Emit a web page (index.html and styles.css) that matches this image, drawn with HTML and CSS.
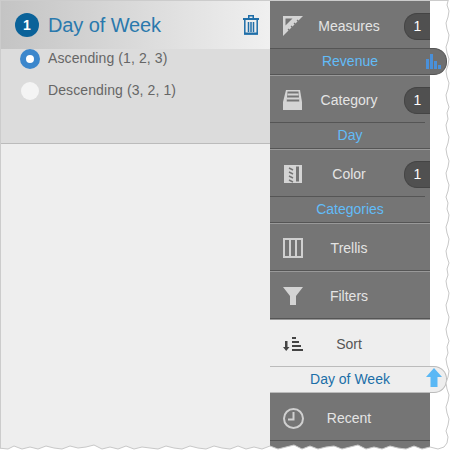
FILE: index.html
```html
<!DOCTYPE html>
<html>
<head>
  <meta charset="UTF-8">
  <title>Sort</title>
  <link rel="stylesheet" href="styles.css">
</head>
<body>
  <div class="app">
    <!-- sort options -->
    <div class="panel">
      <div class="sort-box">
        <div class="sort-head">
          <span class="num">1</span>
          <span class="sort-title">Day of Week</span>
          <svg class="trash" width="16" height="20" viewBox="0 0 16 20">
            <path fill="#1f6ea8" d="M0 3h16v2H0zM5 0h6v3H9.500V1.500h-3V3H5z"/>
            <path fill="none" stroke="#1f6ea8" stroke-width="1.500" d="M1.800 5v14h12.400V5M5.500 7v10M8 7v10M10.500 7v10"/>
            <path fill="#1f6ea8" d="M1 17.500h14V19.500H1z"/>
          </svg>
        </div>
        <div class="option first">
          <span class="radio on"></span>
          <span class="option-text">Ascending (1, 2, 3)</span>
        </div>
        <div class="option">
          <span class="radio"></span>
          <span class="option-text">Descending (3, 2, 1)</span>
        </div>
      </div>
    </div>

    <!-- shelf -->
    <div class="shelf">
      <div class="item tall">
        <svg class="icon" width="20" height="20" viewBox="0 0 20 20">
          <path fill="#d4d4d4" d="M0 0h20L0 20z"/>
          <path fill="#757575" d="M2.500 2.500h7l-7 7z"/>
          <path fill="none" stroke="#757575" stroke-width="1.200" d="M14 4l1.500 1.500M11 7l1.500 1.500M8 10l1.500 1.500M5 13l1.500 1.500"/>
        </svg>
        <span class="label">Measures</span>
        <span class="badge">1</span>
      </div>
      <div class="sub pill">
        <span>Revenue</span>
        <svg class="pill-icon" width="15" height="15" viewBox="0 0 15 15">
          <path fill="#4a90d9" d="M0 5h3v10H0zM4 0h3v15H4zM8 7h3v8H8zM12 11h3v4h-3z"/>
        </svg>
      </div>
      <div class="sep-light"></div>

      <div class="item short">
        <svg class="icon" width="20" height="20" viewBox="0 0 20 20">
          <path fill="#d4d4d4" d="M3 0h14l2 12v8H0v-8z"/>
          <path fill="#757575" d="M4.500 1.500h11l.8 10H3.700z"/>
          <path fill="#d4d4d4" d="M4.500 3.500h11v2h-11zM4 7.500h12v2H4z"/>
        </svg>
        <span class="label">Category</span>
        <span class="badge">1</span>
      </div>
      <div class="sub">Day</div>
      <div class="sep"></div>

      <div class="item short">
        <svg class="icon" width="18" height="18" viewBox="0 0 18 18">
          <path fill="#d4d4d4" d="M0 0h18v18H0z"/>
          <path fill="#757575" d="M12 1.500h3v15h-3z"/>
          <path fill="none" stroke="#757575" stroke-width="1.500" d="M5 3l4 2M5 7l4 2M5 11l4 2M5 15l4 2"/>
        </svg>
        <span class="label">Color</span>
        <span class="badge">1</span>
      </div>
      <div class="sub">Categories</div>
      <div class="sep"></div>

      <div class="item">
        <svg class="icon" width="20" height="20" viewBox="0 0 20 20">
          <path fill="none" stroke="#d0d0d0" stroke-width="2" d="M1 1h18v18H1zM7 1v18M13 1v18"/>
        </svg>
        <span class="label">Trellis</span>
      </div>
      <div class="sep"></div>

      <div class="item">
        <svg class="icon" width="20" height="18" viewBox="0 0 20 18">
          <path fill="#d4d4d4" d="M0 0h20l-7 9v9H7V9z"/>
        </svg>
        <span class="label">Filters</span>
      </div>
      <div class="sep"></div>

      <div class="item active">
        <svg class="icon" width="20" height="14" viewBox="0 0 20 14">
          <path fill="#444" d="M2 4h2.500v6H6.500L3.200 14 0 10h2z"/>
          <path fill="#444" d="M9 0h4v2H9zM9 4h7v2H9zM9 8h9v2H9zM9 12h11v2H9z"/>
        </svg>
        <span class="label">Sort</span>
      </div>
      <div class="sub pill light">
        <span>Day of Week</span>
        <svg class="pill-icon arrow" width="16" height="19" viewBox="0 0 16 19">
          <path fill="#5ab8f5" d="M8 0l8 9h-4.500v10h-7V9H0z"/>
        </svg>
      </div>

      <div class="item tall">
        <svg class="icon" width="21" height="21" viewBox="0 0 21 21">
          <circle cx="10.500" cy="10.500" r="9.500" fill="none" stroke="#d0d0d0" stroke-width="2"/>
          <path fill="none" stroke="#d0d0d0" stroke-width="2" d="M10.500 4v7.500H5"/>
        </svg>
        <span class="label">Recent</span>
      </div>
      <div class="sep-dark"></div>
    </div>
  </div>

  <!-- torn paper edge of the screenshot -->
  <svg class="torn" width="452" height="452" viewBox="0 0 452 452">
    <path fill="#fff" stroke="#c8c8c8" stroke-width="1" d="M-2 455V448L8 449 14 446 22 449 30 447 38 449 46 446 54 448 62 449 70 446 78 448 86 447 94 445 102 449 110 447 118 449 126 446 134 449 142 447 150 448 158 449 166 446 174 448 182 449 190 446 198 448 206 449 214 446 222 448 230 449 238 446 246 449 254 447 262 449 270 446 278 449 286 447 294 445 302 449 310 446 318 449 326 447 334 446 342 449 350 447 358 445 366 449 374 447 382 449 390 446 398 448 406 449 414 446 422 449 430 447 438 449 444 447 447 443 448 437 446 431 448 425 449 419 447 413 446 407 448 401 449 395 447 389 446 383 448 377 449 371 447 365 446 359 448 353 447 347 449 341 447 335 446 329 448 323 449 317 447 311 446 305 448 299 449 293 447 287 446 281 448 275 447 269 449 263 447 257 446 251 448 245 449 239 447 233 446 227 448 221 449 215 447 209 448 203 446 197 448 191 449 185 447 179 446 173 448 167 449 161 447 155 446 149 448 143 449 137 447 131 446 125 448 119 447 113 449 107 447 101 446 95 448 89 449 83 447 77 446 71 448 65 449 59 447 53 446 47 448 41 449 35 447 29 446 23 448 17 449 11 447 5 448 1 449-2H455V455Z"/>
  </svg>
</body>
</html>
```

FILE: styles.css
```css
html, body {
  margin: 0;
  padding: 0;
  height: 100%;
  overflow: hidden;
  background: white;
  font-family: "Liberation Sans", Arial, sans-serif;
}
.app {
  display: flex;
  height: 452px;
  box-sizing: border-box;
  border-top: 1px solid #ccc;
}
.panel {
  width: 270px;
  flex: none;
  background: #eee;
  border-left: 1px solid #ccc;
  box-sizing: border-box;
}
.sort-box {
  height: 142px;
  background: #dcdcdc;
  border-bottom: 1px solid #bbb;
}
.sort-head {
  display: flex;
  align-items: center;
  height: 48px;
  padding: 0 11px 0 14px;
  background: linear-gradient(to right, #c4c4c4, #f0f0f0);
  box-sizing: border-box;
}
.num {
  width: 24px;
  height: 24px;
  border-radius: 50%;
  background: #0a6299;
  color: white;
  font-size: 14px;
  font-weight: bold;
  line-height: 24px;
  text-align: center;
}
.sort-title {
  flex: 1;
  margin-left: 9px;
  font-size: 20px;
  letter-spacing: -0.1px;
  color: #2a79ad;
}
.option {
  display: flex;
  align-items: center;
  height: 32px;
  padding-left: 19px;
  font-size: 14px;
  letter-spacing: 0.1px;
  color: #666;
}
.option.first {
  margin-top: -6px;
}
.option-text {
  margin-bottom: 2px;
}
.radio {
  width: 18px;
  height: 18px;
  margin: 0 9px 0 1px;
  border-radius: 50%;
  background: #f4f4f4;
}
.radio.on {
  width: 8px;
  height: 8px;
  margin: 0 8px 0 0;
  border: 6px solid #3c87cc;
  background: white;
}
.shelf {
  width: 160px;
  flex: none;
  background: #757575;
}
.item {
  display: grid;
  grid-template-columns: 46px 1fr 48px;
  align-items: center;
  height: 46px;
  padding-top: 2px;
  box-sizing: border-box;
  font-size: 14px;
  color: #e4e4e4;
}
.item.tall {
  height: 47px;
  padding-top: 3px;
}
.item.short {
  height: 47px;
  padding-top: 1px;
  background: linear-gradient(#555, #555) left bottom / 155px 1px no-repeat;
}
.item.active {
  background: #eee;
  color: #555;
}
.icon {
  justify-self: center;
}
.label {
  grid-column: 2;
  text-align: center;
}
.badge {
  grid-column: 3;
  justify-self: end;
  width: 25px;
  height: 25px;
  border: 1px solid #444;
  border-right: none;
  border-radius: 13px 0 0 13px;
  background: #505050;
  color: white;
  font-size: 14px;
  line-height: 25px;
  text-align: center;
}
.sub {
  height: 25px;
  font-size: 14px;
  line-height: 24px;
  text-align: center;
  color: #62bcf8;
}
.sep {
  height: 1px;
  background: #555;
  border-bottom: 1px solid #999;
}
.sep-light {
  height: 1px;
  background: #999;
}
.sep-dark {
  height: 1px;
  background: #555;
}
.pill {
  width: 177px;
  height: 27px;
  box-sizing: border-box;
  border: 1px solid #555;
  border-left: none;
  border-radius: 0 13px 13px 0;
  background: #6f6f6f;
  position: relative;
}
.pill span {
  display: block;
  width: 160px;
  text-align: center;
}
.pill-icon {
  position: absolute;
  right: 5px;
  top: 5px;
}
.pill.light {
  background: #eee;
  border-color: #bbb;
  color: #1b6ea8;
}
.pill-icon.arrow {
  right: 4px;
  top: 1px;
}
.torn {
  position: absolute;
  left: 0;
  top: 0;
}
```
